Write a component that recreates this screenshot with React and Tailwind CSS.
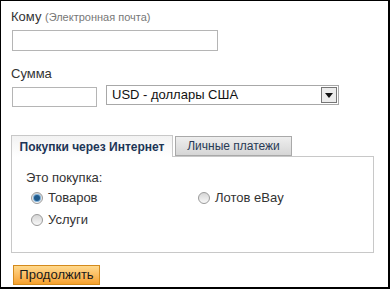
import { useState } from 'react';

function Radio({ checked, label, onClick }) {
  return (
    <label className="flex items-center gap-[5px] cursor-pointer" onClick={onClick}>
      <span className="w-[12px] h-[12px] rounded-full border border-[#9a9a9a] bg-gradient-to-b from-[#d6d6d6] to-[#f8f8f8] flex items-center justify-center">
        {checked && <span className="w-[6px] h-[6px] rounded-full bg-[#1f5a8c] shadow-[0_0_0_1px_#7fb0d8]" />}
      </span>
      <span>{label}</span>
    </label>
  );
}

export default function App() {
  const [tab, setTab] = useState('web');
  const [kind, setKind] = useState('goods');

  return (
    <div className="w-[390px] h-[289px] bg-white border-t border-l border-r-2 border-b-2 border-black pt-[8px] pl-[10px] text-[13px] leading-[16px] text-[#333] font-['Liberation_Sans',Arial,sans-serif] overflow-hidden">
      {/* Кому */}
      <div>
        Кому <span className="text-[11px] text-[#777]">(Электронная почта)</span>
      </div>
      <input className="block ml-[1px] mt-[5px] w-[206px] h-[21px] border border-[#b5b5b5] outline-none px-1" />

      {/* Сумма */}
      <div className="mt-[15px]">Сумма</div>
      <div className="flex items-start mt-[3px]">
        <input className="block ml-[1px] mt-[2px] w-[85px] h-[20px] border border-[#b5b5b5] outline-none px-1" />
        <div className="ml-[9px] w-[233px] h-[20px] border border-[#a8a8a8] flex items-center justify-between pl-[5px] pr-[1px]">
          <span className="text-[#111]">USD - доллары США</span>
          <span className="w-[16px] h-[16px] border border-[#767676] bg-[#ececec] flex items-center justify-center">
            <svg width="8" height="5" viewBox="0 0 8 5"><path d="M0 0h8L4 5z" fill="#111" /></svg>
          </span>
        </div>
      </div>

      {/* Tabs */}
      <div className="mt-[27px] w-[363px]">
        <div className="flex items-end h-[22px]">
          <button
            onClick={() => setTab('web')}
            className="h-[22px] w-[162px] border border-b-0 border-[#c8c8c8] bg-gradient-to-b from-[#f2f2f2] to-white font-bold text-[#1d3556] text-[12px] relative -mb-px z-10"
          >
            Покупки через Интернет
          </button>
          <button
            onClick={() => setTab('personal')}
            className="ml-[2px] h-[20px] w-[117px] border border-[#a9a9a9] bg-gradient-to-b from-[#eeeeee] to-[#d6d6d6] text-[#283a55] text-[12px]"
          >
            Личные платежи
          </button>
        </div>
        <div className="h-[97px] border border-[#c8c8c8] pt-[13px] pl-[14px]">
          <div>Это покупка:</div>
          <div className="grid grid-cols-[167px_1fr] mt-[4px] pl-[5px] gap-y-[6px]">
            <Radio checked={kind === 'goods'} label="Товаров" onClick={() => setKind('goods')} />
            <Radio checked={kind === 'ebay'} label="Лотов eBay" onClick={() => setKind('ebay')} />
            <Radio checked={kind === 'services'} label="Услуги" onClick={() => setKind('services')} />
          </div>
        </div>
      </div>

      <button className="mt-[12px] ml-[2px] w-[87px] h-[20px] border border-[#d48a1c] bg-gradient-to-b from-[#ffd98c] to-[#f6a12a] text-[#1a1a1a] text-[13px] leading-[18px]">
        Продолжить
      </button>
    </div>
  );
}
